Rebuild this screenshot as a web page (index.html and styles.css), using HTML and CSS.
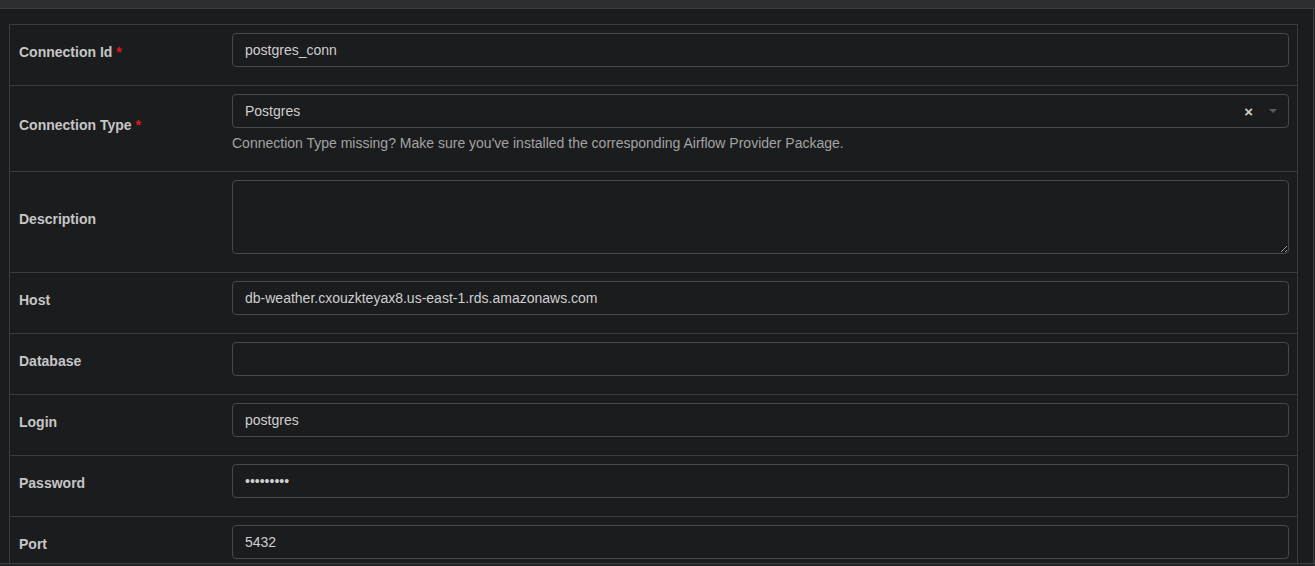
FILE: index.html
```html
<!DOCTYPE html>
<html lang="en">
<head>
<meta charset="utf-8">
<title>Edit Connection</title>
<link rel="stylesheet" href="styles.css">
</head>
<body>
<div class="topbar"></div>
<div class="frame">
  <main class="content">
    <table class="form-table">
      <tbody>
        <tr>
          <th><label class="lbl">Connection Id <span class="req">*</span></label></th>
          <td><div class="field"><input class="ctl" type="text" value="postgres_conn"></div></td>
        </tr>
        <tr>
          <th><label class="lbl">Connection Type <span class="req">*</span></label></th>
          <td>
            <div class="select">
              <span class="select-value">Postgres</span>
              <span class="select-clear">×</span>
              <span class="select-arrow"></span>
            </div>
            <p class="help">Connection Type missing? Make sure you've installed the corresponding Airflow Provider Package.</p>
          </td>
        </tr>
        <tr>
          <th><label class="lbl">Description</label></th>
          <td><div class="field"><textarea class="ctl area"></textarea></div></td>
        </tr>
        <tr>
          <th><label class="lbl">Host</label></th>
          <td><div class="field"><input class="ctl" type="text" value="db-weather.cxouzkteyax8.us-east-1.rds.amazonaws.com"></div></td>
        </tr>
        <tr>
          <th><label class="lbl">Database</label></th>
          <td><div class="field"><input class="ctl" type="text" value=""></div></td>
        </tr>
        <tr>
          <th><label class="lbl">Login</label></th>
          <td><div class="field"><input class="ctl" type="text" value="postgres"></div></td>
        </tr>
        <tr>
          <th><label class="lbl">Password</label></th>
          <td><div class="field"><input class="ctl" type="password" value="123456789"></div></td>
        </tr>
        <tr>
          <th><label class="lbl">Port</label></th>
          <td><div class="field"><input class="ctl" type="text" value="5432"></div></td>
        </tr>
      </tbody>
    </table>
  </main>
  <div class="scroll-edge"></div>
</div>
<div class="bottombar"></div>
</body>
</html>
```

FILE: styles.css
```css
html, body {
  margin: 0;
  padding: 0;
  height: 100%;
}
body {
  background: #1b1c1e;
  color: #c8c8c8;
  font-family: "Liberation Sans", Arial, sans-serif;
  font-size: 14px;
  color-scheme: dark;
  display: flex;
  flex-direction: column;
  overflow: hidden;
}
.topbar {
  height: 8px;
  flex: none;
  background: #2b2e30;
  border-bottom: 1px solid #3a3d3f;
}
.frame {
  flex: 1;
  min-height: 0;
  display: flex;
  border-bottom: 1px solid #3a3d3f;
  overflow: hidden;
}
.bottombar {
  height: 2px;
  flex: none;
  background: #222426;
}
.content {
  flex: 1;
  padding: 15px 15px 0 9px;
  overflow: hidden;
}
.scroll-edge {
  width: 1px;
  flex: none;
  background: #232527;
  border-left: 1px solid #3c3f41;
}
.form-table {
  width: 100%;
  border-collapse: collapse;
  border: 1px solid #3a3b3d;
}
.form-table tr {
  border-top: 1px solid #3a3b3d;
}
.form-table th {
  width: 197px;
  padding: 8px 8px 8px 9px;
  text-align: left;
  vertical-align: middle;
  font-weight: normal;
}
.form-table td {
  padding: 8px 8px 8px 8px;
  vertical-align: top;
}
.lbl {
  display: inline-block;
  font-size: 14px;
  font-weight: bold;
  color: #c6c6c6;
  line-height: 20px;
  margin-bottom: 7px;
}
.req {
  color: #e01b1b;
}
.field {
  margin-bottom: 10px;
}
.ctl {
  display: block;
  box-sizing: border-box;
  width: 100%;
  height: 34px;
  padding: 6px 12px;
  background: #1b1c1e;
  border: 1px solid #48494b;
  border-radius: 4px;
  color: #cfcfcf;
  font-family: "Liberation Sans", Arial, sans-serif;
  font-size: 14px;
  outline: none;
  margin: 0;
}
.area {
  height: 74px;
  resize: vertical;
}
.select {
  box-sizing: border-box;
  height: 34px;
  display: flex;
  align-items: center;
  padding: 0 11px 0 12px;
  border: 1px solid #48494b;
  border-radius: 4px;
  color: #cfcfcf;
}
.select-value {
  flex: 1;
}
.select-clear {
  font-size: 15px;
  font-weight: bold;
  color: #d0d0d0;
  margin-right: 16px;
  line-height: 1;
}
.select-arrow {
  width: 0;
  height: 0;
  border-left: 4px solid transparent;
  border-right: 4px solid transparent;
  border-top: 4px solid #5a5c5e;
}
.help {
  margin: 5px 0 10px;
  line-height: 20px;
  color: #a3a3a3;
}
```
